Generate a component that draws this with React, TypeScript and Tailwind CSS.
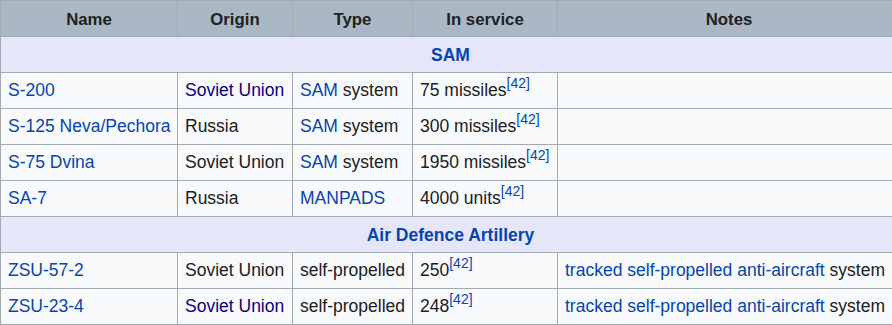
import React from "react";

const L = ({ children, v }: { children: React.ReactNode; v?: boolean }) => (
  <a className={v ? "text-[#0b0080]" : "text-[#0645ad]"}>{children}</a>
);

const Ref = () => (
  <sup className="text-[14px] leading-none text-[#0645ad] relative top-[-2px] align-super">[42]</sup>
);

const td = "border border-[#a2a9b1] px-[7px] h-[36px] bg-[#f8f9fa] whitespace-nowrap align-middle text-[17.5px]";
const th = "border border-[#a2a9b1] px-[7px] pt-[3px] pb-0 h-[36px] bg-[#aab8c6] font-bold text-center whitespace-nowrap text-[16.8px]";
const sec = "border border-[#a2a9b1] px-[7px] pt-[1px] h-[36px] bg-[#e6e6fa] font-bold text-center text-[17.5px]";

type Row = [React.ReactNode, React.ReactNode, React.ReactNode, React.ReactNode, React.ReactNode];

const sam: Row[] = [
  [<L>S-200</L>, <L v>Soviet Union</L>, <><L>SAM</L> system</>, <>75 missiles<Ref /></>, ""],
  [<L>S-125 Neva/Pechora</L>, "Russia", <><L>SAM</L> system</>, <>300 missiles<Ref /></>, ""],
  [<L>S-75 Dvina</L>, "Soviet Union", <><L>SAM</L> system</>, <>1950 missiles<Ref /></>, ""],
  [<L>SA-7</L>, "Russia", <L>MANPADS</L>, <>4000 units<Ref /></>, ""],
];

const notes = (
  <>
    <L>tracked</L> <L>self-propelled</L> <L>anti-aircraft</L> system
  </>
);

const ada: Row[] = [
  [<L>ZSU-57-2</L>, "Soviet Union", "self-propelled", <>250<Ref /></>, notes],
  [<L>ZSU-23-4</L>, <L v>Soviet Union</L>, "self-propelled", <>248<Ref /></>, notes],
];

function Rows({ rows }: { rows: Row[] }) {
  return (
    <>
      {rows.map((r, i) => (
        <tr key={i}>
          {r.map((c, j) => (
            <td key={j} className={td}>
              {c}
            </td>
          ))}
        </tr>
      ))}
    </>
  );
}

export default function App() {
  return (
    <div className="w-[892px] h-[325px] overflow-hidden bg-white">
      <table
        className="table-fixed border-collapse text-[#202122] w-[900px]"
        style={{ fontFamily: '"Liberation Sans", Arial, sans-serif' }}
      >
        <colgroup>
          <col className="w-[177px]" />
          <col className="w-[115px]" />
          <col className="w-[120px]" />
          <col className="w-[145px]" />
          <col className="w-[343px]" />
        </colgroup>
        <thead>
          <tr>
            <th className={th}>Name</th>
            <th className={th}>Origin</th>
            <th className={th}>Type</th>
            <th className={th}>In service</th>
            <th className={th}>Notes</th>
          </tr>
        </thead>
        <tbody>
          <tr>
            <td colSpan={5} className={sec}>
              <L>SAM</L>
            </td>
          </tr>
          <Rows rows={sam} />
          <tr>
            <td colSpan={5} className={sec}>
              <L>Air Defence Artillery</L>
            </td>
          </tr>
          <Rows rows={ada} />
        </tbody>
      </table>
    </div>
  );
}
